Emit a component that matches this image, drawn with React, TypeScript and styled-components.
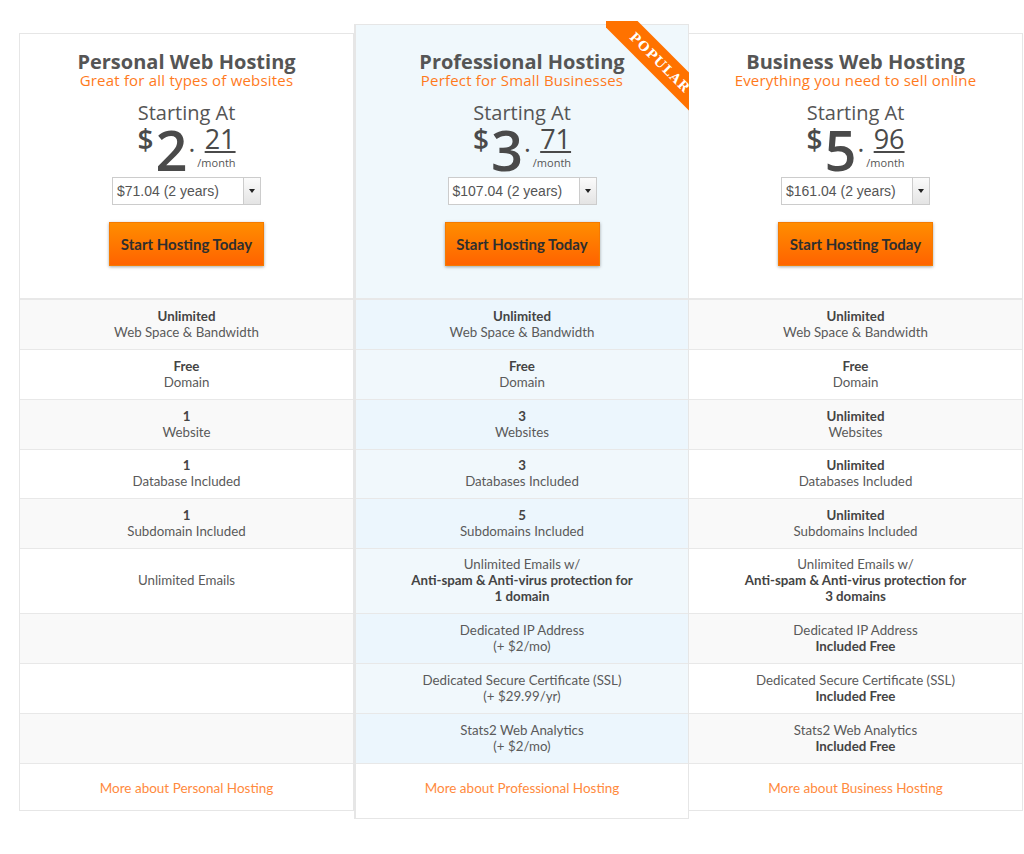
import React from 'react';
import styled, { createGlobalStyle } from 'styled-components';

const GlobalStyle = createGlobalStyle`
  body {
    margin: 0;
    background: #fff;
    font-family: Lato, "Open Sans", sans-serif;
  }
`;

const Page = styled.div`
  display: flex;
  align-items: flex-start;
  padding: 24px 0 0 19px;
`;

const Column = styled.div<{ $featured?: boolean }>`
  position: relative;
  box-sizing: border-box;
  width: 335px;
  margin-top: ${({ $featured }) => ($featured ? '0' : '9px')};
  background: ${({ $featured }) => ($featured ? '#f0f8fc' : '#fff')};
  border: 1px solid #e6e6e6;
  border-left-width: ${({ $featured }) => ($featured ? '2px' : '1px')};
  display: flex;
  flex-direction: column;
  &:last-child {
    width: 334px;
    border-left: none;
  }
`;

const Header = styled.div<{ $featured?: boolean }>`
  height: ${({ $featured }) => ($featured ? '273px' : '264px')};
  padding-top: ${({ $featured }) => ($featured ? '27px' : '18px')};
  box-sizing: border-box;
  display: flex;
  flex-direction: column;
  align-items: center;
`;

const Title = styled.h2`
  margin: 0;
  font-family: "Open Sans", sans-serif;
  font-weight: 700;
  font-size: 20px;
  line-height: 20px;
  color: #555;
`;

const Subtitle = styled.div`
  font-family: "Open Sans", sans-serif;
  font-weight: 400;
  font-size: 15px;
  letter-spacing: 0.2px;
  line-height: 16px;
  color: #ff7a1c;
`;

const Starting = styled.div`
  margin-top: 14px;
  font-family: "Open Sans", sans-serif;
  font-size: 20px;
  line-height: 22px;
  color: #555;
`;

const PriceRow = styled.div`
  display: flex;
  align-items: flex-start;
  height: 48px;
  color: #4a4a4a;
  font-family: "Open Sans", sans-serif;
`;

const Dollar = styled.span`
  font-size: 28px;
  line-height: 30px;
  font-weight: 600;
`;

const Whole = styled.span`
  font-size: 56px;
  line-height: 50px;
  font-weight: 600;
  margin-left: 2px;
  letter-spacing: -1px;
`;

const Dot = styled.span`
  font-size: 26px;
  line-height: 30px;
  margin: 3px 2px 0 2px;
`;

const CentsBox = styled.div`
  display: flex;
  flex-direction: column;
  align-items: flex-end;
`;

const Cents = styled.span`
  font-size: 27px;
  line-height: 28px;
  text-decoration: underline;
  text-decoration-thickness: 2px;
  text-underline-offset: 2px;
  margin-top: 1px;
`;

const Per = styled.span`
  font-family: "Open Sans", sans-serif;
  font-size: 11px;
  line-height: 12px;
  margin-top: 4px;
  color: #555;
`;

const Select = styled.div`
  margin-top: 5px;
  width: 149px;
  height: 28px;
  box-sizing: border-box;
  border: 1px solid #ccc;
  background: #fff;
  display: flex;
  align-items: stretch;
`;

const SelectText = styled.span`
  flex: 1;
  padding-left: 4px;
  font-family: "Liberation Sans", Arial, sans-serif;
  font-size: 14px;
  line-height: 26px;
  color: #555;
`;

const SelectArrow = styled.span`
  width: 16px;
  border-left: 1px solid #ccc;
  background: linear-gradient(#fbfbfb, #e4e4e4);
  display: flex;
  align-items: center;
  justify-content: center;
  &::after {
    content: '';
    border-left: 3px solid transparent;
    border-right: 3px solid transparent;
    border-top: 4px solid #222;
  }
`;

const CTA = styled.button`
  margin-top: 17px;
  width: 155px;
  height: 44px;
  border: 1px solid #f57a00;
  background: linear-gradient(#ff8d00, #ff6300);
  box-shadow: 0 1px 3px rgba(0, 0, 0, 0.35);
  font-family: Lato, sans-serif;
  font-weight: 700;
  font-size: 15px;
  color: #2e2e2e;
  cursor: pointer;
`;

const Row = styled.div<{ $alt: boolean; $featured?: boolean; $h: number; $first?: boolean }>`
  box-sizing: border-box;
  height: ${({ $h }) => $h}px;
  padding-bottom: 2px;
  border-top: ${({ $first }) => ($first ? '2px' : '1px')} solid #e8e8e8;
  background: ${({ $alt, $featured }) =>
    $featured ? ($alt ? '#ecf6fd' : '#f1f8fc') : $alt ? '#f9f9f9' : '#fff'};
  display: flex;
  flex-direction: column;
  align-items: center;
  justify-content: center;
  text-align: center;
  font-size: 13.3px;
  line-height: 16px;
  color: #5a5a5a;
`;

const Strong = styled.span`
  font-weight: 700;
  color: #444;
`;

const Footer = styled.div<{ $featured?: boolean }>`
  box-sizing: border-box;
  height: ${({ $featured }) => ($featured ? '55px' : '47px')};
  padding-top: 13px;
  border-top: 1px solid #e8e8e8;
  background: #fff;
  text-align: center;
`;

const MoreLink = styled.a`
  font-size: 13.5px;
  line-height: 16px;
  color: #ff8a3d;
  text-decoration: none;
`;

const RibbonWrap = styled.div`
  position: absolute;
  top: -4px;
  right: -4px;
  width: 86px;
  height: 92px;
  overflow: hidden;
  pointer-events: none;
`;

const Ribbon = styled.div`
  position: absolute;
  left: -21px;
  top: 28px;
  width: 150px;
  height: 27px;
  background: #ff7200;
  transform: rotate(45deg);
  color: #fff;
  font-family: "DejaVu Serif", serif;
  font-weight: 700;
  font-size: 13px;
  line-height: 27px;
  letter-spacing: 1px;
  text-align: center;
`;

type Line = { text: string; bold?: boolean };
type Plan = {
  title: string;
  subtitle: string;
  whole: string;
  cents: string;
  total: string;
  link: string;
  featured?: boolean;
  rows: Line[][];
};

// heights of the feature rows, top to bottom
const rowHeights = [51, 50, 50, 49, 50, 65, 50, 50, 50];

const common: Line[][] = [
  [{ text: 'Unlimited', bold: true }, { text: 'Web Space & Bandwidth' }],
  [{ text: 'Free', bold: true }, { text: 'Domain' }],
];

const plans: Plan[] = [
  {
    title: 'Personal Web Hosting',
    subtitle: 'Great for all types of websites',
    whole: '2',
    cents: '21',
    total: '$71.04 (2 years)',
    link: 'More about Personal Hosting',
    rows: [
      ...common,
      [{ text: '1', bold: true }, { text: 'Website' }],
      [{ text: '1', bold: true }, { text: 'Database Included' }],
      [{ text: '1', bold: true }, { text: 'Subdomain Included' }],
      [{ text: 'Unlimited Emails' }],
      [],
      [],
      [],
    ],
  },
  {
    title: 'Professional Hosting',
    subtitle: 'Perfect for Small Businesses',
    whole: '3',
    cents: '71',
    total: '$107.04 (2 years)',
    link: 'More about Professional Hosting',
    featured: true,
    rows: [
      ...common,
      [{ text: '3', bold: true }, { text: 'Websites' }],
      [{ text: '3', bold: true }, { text: 'Databases Included' }],
      [{ text: '5', bold: true }, { text: 'Subdomains Included' }],
      [
        { text: 'Unlimited Emails w/' },
        { text: 'Anti-spam & Anti-virus protection for', bold: true },
        { text: '1 domain', bold: true },
      ],
      [{ text: 'Dedicated IP Address' }, { text: '(+ $2/mo)' }],
      [{ text: 'Dedicated Secure Certificate (SSL)' }, { text: '(+ $29.99/yr)' }],
      [{ text: 'Stats2 Web Analytics' }, { text: '(+ $2/mo)' }],
    ],
  },
  {
    title: 'Business Web Hosting',
    subtitle: 'Everything you need to sell online',
    whole: '5',
    cents: '96',
    total: '$161.04 (2 years)',
    link: 'More about Business Hosting',
    rows: [
      ...common,
      [{ text: 'Unlimited', bold: true }, { text: 'Websites' }],
      [{ text: 'Unlimited', bold: true }, { text: 'Databases Included' }],
      [{ text: 'Unlimited', bold: true }, { text: 'Subdomains Included' }],
      [
        { text: 'Unlimited Emails w/' },
        { text: 'Anti-spam & Anti-virus protection for', bold: true },
        { text: '3 domains', bold: true },
      ],
      [{ text: 'Dedicated IP Address' }, { text: 'Included Free', bold: true }],
      [{ text: 'Dedicated Secure Certificate (SSL)' }, { text: 'Included Free', bold: true }],
      [{ text: 'Stats2 Web Analytics' }, { text: 'Included Free', bold: true }],
    ],
  },
];

const PlanColumn: React.FC<{ plan: Plan }> = ({ plan }) => (
  <Column $featured={plan.featured}>
    {plan.featured && (
      <RibbonWrap>
        <Ribbon>POPULAR</Ribbon>
      </RibbonWrap>
    )}
    <Header $featured={plan.featured}>
      <Title>{plan.title}</Title>
      <Subtitle>{plan.subtitle}</Subtitle>
      <Starting>Starting At</Starting>
      <PriceRow>
        <Dollar>$</Dollar>
        <Whole>{plan.whole}</Whole>
        <Dot>.</Dot>
        <CentsBox>
          <Cents>{plan.cents}</Cents>
          <Per>/month</Per>
        </CentsBox>
      </PriceRow>
      <Select>
        <SelectText>{plan.total}</SelectText>
        <SelectArrow />
      </Select>
      <CTA>Start Hosting Today</CTA>
    </Header>
    {plan.rows.map((lines, i) => (
      <Row
        key={i}
        $alt={i % 2 === 0}
        $featured={plan.featured}
        $h={rowHeights[i]}
        $first={i === 0}
      >
        {lines.map((l, j) =>
          l.bold ? <Strong key={j}>{l.text}</Strong> : <span key={j}>{l.text}</span>
        )}
      </Row>
    ))}
    <Footer $featured={plan.featured}>
      <MoreLink href="#">{plan.link}</MoreLink>
    </Footer>
  </Column>
);

export default function App() {
  return (
    <>
      <GlobalStyle />
      <Page>
        {plans.map((p) => (
          <PlanColumn key={p.title} plan={p} />
        ))}
      </Page>
    </>
  );
}
